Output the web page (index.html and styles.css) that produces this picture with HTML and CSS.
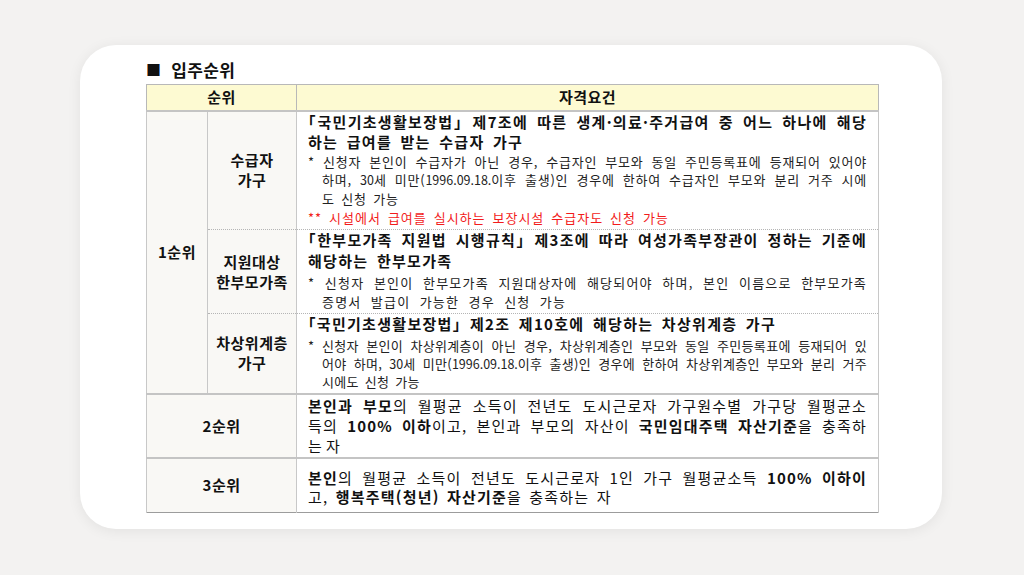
FILE: index.html
```html
<!DOCTYPE html>
<html lang="ko">
<head>
<meta charset="utf-8">
<link rel="stylesheet" href="styles.css">
</head>
<body>
<div class="card">
  <h2 class="title"><span class="sq">■</span>입주순위</h2>
  <table class="tbl">
    <colgroup><col class="c1"><col class="c2"><col class="c3"></colgroup>
    <thead>
      <tr><th colspan="2">순위</th><th>자격요건</th></tr>
    </thead>
    <tbody>
      <tr class="r1">
        <td class="lab" rowspan="3">1순위</td>
        <td class="lab">수급자<br>가구</td>
        <td class="con">
          <p class="main">
            <span class="ln">「국민기초생활보장법」 제7조에 따른 생계·의료·주거급여 중 어느 하나에 해당</span>
            <span class="ln end">하는 급여를 받는 수급자 가구</span>
          </p>
          <p class="note n1">
            <span class="ln">* 신청자 본인이 수급자가 아닌 경우, 수급자인 부모와 동일 주민등록표에 등재되어 있어야</span>
            <span class="ln ind">하며, <span class="num">30</span>세 미만(<span class="num">1996.09.18.</span>이후 출생)인 경우에 한하여 수급자인 부모와 분리 거주 시에</span>
            <span class="ln ind end">도 신청 가능</span>
          </p>
          <p class="red"><span class="ln end">** 시설에서 급여를 실시하는 보장시설 수급자도 신청 가능</span></p>
        </td>
      </tr>
      <tr class="r2 dot">
        <td class="lab">지원대상<br>한부모가족</td>
        <td class="con">
          <p class="main">
            <span class="ln">「한부모가족 지원법 시행규칙」 제3조에 따라 여성가족부장관이 정하는 기준에</span>
            <span class="ln end">해당하는 한부모가족</span>
          </p>
          <p class="note n2">
            <span class="ln">* 신청자 본인이 한부모가족 지원대상자에 해당되어야 하며, 본인 이름으로 한부모가족</span>
            <span class="ln ind end wide">증명서 발급이 가능한 경우 신청 가능</span>
          </p>
        </td>
      </tr>
      <tr class="r3 dot">
        <td class="lab">차상위계층<br>가구</td>
        <td class="con">
          <p class="main">
            <span class="ln end">「국민기초생활보장법」 제2조 제10호에 해당하는 차상위계층 가구</span>
          </p>
          <p class="note n3">
            <span class="ln">* 신청자 본인이 차상위계층이 아닌 경우, 차상위계층인 부모와 동일 주민등록표에 등재되어 있</span>
            <span class="ln ind">어야 하며, <span class="num">30</span>세 미만(<span class="num">1996.09.18.</span>이후 출생)인 경우에 한하여 차상위계층인 부모와 분리 거주</span>
            <span class="ln ind end">시에도 신청 가능</span>
          </p>
        </td>
      </tr>
      <tr class="r4">
        <td class="lab" colspan="2">2순위</td>
        <td class="con">
          <p class="body">
            <span class="ln"><b>본인과 부모</b>의 월평균 소득이 전년도 도시근로자 가구원수별 가구당 월평균소</span>
            <span class="ln">득의 <b>100% 이하</b>이고, 본인과 부모의 자산이 <b>국민임대주택 자산기준</b>을 충족하</span>
            <span class="ln end tight">는 자</span>
          </p>
        </td>
      </tr>
      <tr class="r5">
        <td class="lab" colspan="2">3순위</td>
        <td class="con">
          <p class="body b3">
            <span class="ln"><b>본인</b>의 월평균 소득이 전년도 도시근로자 1인 가구 월평균소득 <b>100% 이하이</b></span>
            <span class="ln end">고, <b>행복주택(청년) 자산기준</b>을 충족하는 자</span>
          </p>
        </td>
      </tr>
    </tbody>
  </table>
</div>
</body>
</html>
```

FILE: styles.css
```css
* { box-sizing: border-box; }
html, body { margin: 0; padding: 0; }
body {
  width: 1024px;
  height: 575px;
  background: #f3f2f1;
  font-family: "Noto Sans CJK KR", "Noto Sans", sans-serif;
  color: #111;
  overflow: hidden;
  padding: 45px 0 0 80px;
}
.card {
  width: 862px;
  height: 484px;
  background: #fff;
  border-radius: 36px;
  box-shadow: 0 2px 14px rgba(0,0,0,0.07);
  padding: 11px 0 0 66px;
}
.title {
  margin: 0;
  height: 28px;
  font-size: 17px;
  font-weight: 700;
  line-height: 24px;
  letter-spacing: 0.3px;
  display: flex;
  align-items: center;
}
.sq { font-size: 15px; margin-right: 10px; }
.tbl {
  border-collapse: collapse;
  width: 732px;
  table-layout: fixed;
  border: 1px solid #9c9c9c;
}
.c1 { width: 61px; }
.c2 { width: 89px; }
.c3 { width: 582px; }
.tbl th {
  background: #fdfad2;
  font-size: 15px;
  font-weight: 700;
  letter-spacing: 0.5px;
  height: 26px;
  line-height: 20px;
  padding: 0;
  border: 1px solid #b8b8b8;
  border-bottom: 2px solid #c4c4c4;
}
.tbl td {
  border-left: 1px solid #c8c8c8;
  border-right: 1px solid #c8c8c8;
  border-top: 2px solid #c4c4c4;
  padding: 0;
  vertical-align: middle;
}
.tbl tr.dot td:not([rowspan]) { border-top: 1px dotted #b5b5b5; }
.lab {
  background: #f9f8f5;
  text-align: center;
  font-size: 15px;
  font-weight: 700;
  line-height: 20px;
  letter-spacing: 0.5px;
}
.con {
  padding: 0 11px 1px 11px !important;
  vertical-align: top !important;
}
.con p { margin: 0; }
.ln {
  display: block;
  text-align: justify;
  text-align-last: justify;
}
.ln.end { text-align-last: left; }
.ind { padding-left: 14px; }
.main {
  font-size: 15px;
  font-weight: 700;
  line-height: 20.5px;
  letter-spacing: 1.3px;
  word-spacing: 3px;
  font-feature-settings: "halt";
}
.note {
  font-size: 13px;
  line-height: 18.8px;
  color: #222;
  letter-spacing: 0.8px;
  word-spacing: 2px;
}
.con .note.n2 { letter-spacing: 1.2px; margin-top: 3px; }
.con .note.n3 { letter-spacing: 0.3px; margin-top: 2px; line-height: 18.4px; }
.note .wide { word-spacing: 4.5px; }
.num { font-size: 12.5px; letter-spacing: 0; }
.red {
  font-size: 13px;
  line-height: 18.8px;
  color: #f21b1b;
  letter-spacing: 1px;
  word-spacing: 2.3px;
}
.body {
  font-size: 15px;
  line-height: 20px;
  letter-spacing: 1.2px;
  word-spacing: 2px;
}
.body .tight { word-spacing: -1px; letter-spacing: 0.5px; }
.body b { font-weight: 700; }
.r1 { height: 119px; }
.r2 { height: 84px; }
.r3 { height: 80px; }
.r4 { height: 63px; }
.r5 { height: 55px; }
.r4 .con { padding-top: 1px !important; }
.r5 .con { padding-top: 9px !important; }
.b3 { line-height: 19px; }
```
